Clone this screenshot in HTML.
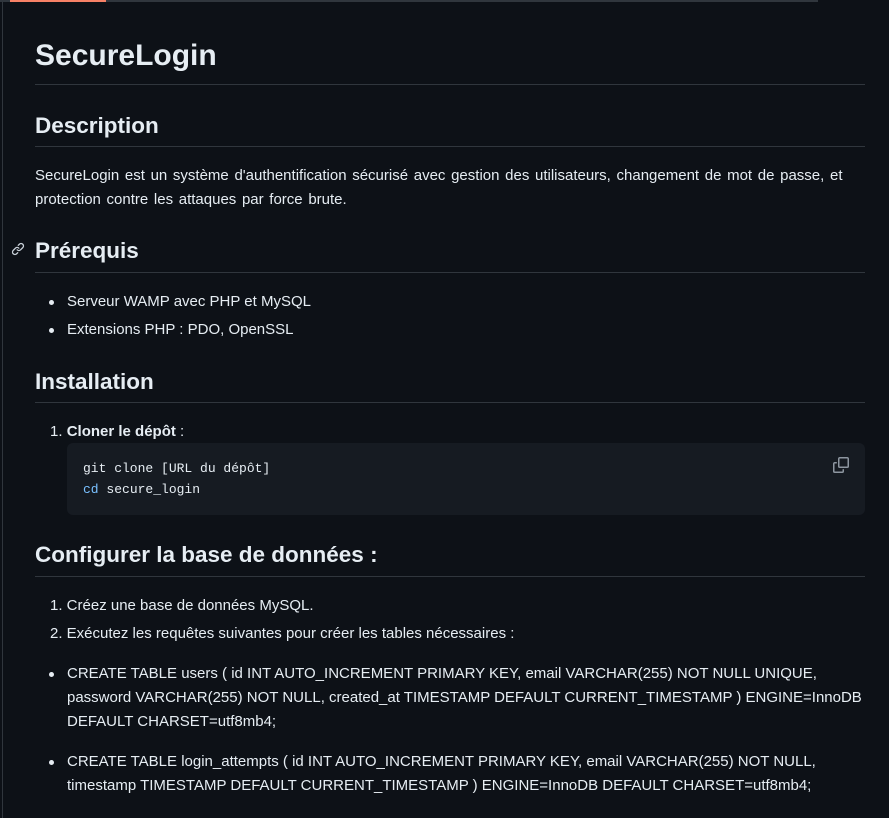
<!DOCTYPE html>
<html><head><meta charset="utf-8"><style>
html,body{margin:0;padding:0;background:#0d1117;width:889px;height:818px;overflow:hidden}
body{position:relative;font-family:"Liberation Sans",sans-serif;color:#e6edf3;font-size:15px}
.a{position:absolute;white-space:nowrap}
.h1{font-size:30px;font-weight:600;left:35px;top:39px}
.h2{font-size:22.5px;font-weight:600;left:35px}
.hr{position:absolute;left:35px;width:830px;height:1px;background:#30363d}
.p{left:35px;font-size:15px}
.li{left:67px;font-size:15px}
.dot{position:absolute;left:49px;width:5px;height:5px;border-radius:50%;background:#e6edf3}
.num{left:50px;font-size:15px}
.code{position:absolute;left:67px;top:443px;width:798px;height:72px;background:#161b22;border-radius:6px}
.mono{font-family:"Liberation Mono",monospace;font-size:13px}
</style></head><body>
<div style="position:absolute;left:0;top:0;width:818px;height:2px;background:#30363d"></div>
<div style="position:absolute;left:10px;top:0;width:96px;height:2px;background:#f78166"></div>
<div style="position:absolute;left:2px;top:2px;width:1px;height:816px;background:#30363d"></div>

<div class="a h1">SecureLogin</div>
<div class="hr" style="top:84px"></div>
<div class="a h2" style="top:113px">Description</div>
<div class="hr" style="top:146px"></div>
<div class="a p" style="top:167px;word-spacing:1.5px">SecureLogin est un système d'authentification sécurisé avec gestion des utilisateurs, changement de mot de passe, et</div>
<div class="a p" style="top:191px;word-spacing:1.5px">protection contre les attaques par force brute.</div>

<svg style="position:absolute;left:11px;top:242px" width="14" height="14" viewBox="0 0 16 16" fill="#c9d1d9"><path d="m7.775 3.275 1.25-1.25a3.5 3.5 0 1 1 4.950 4.95l-2.5 2.5a3.5 3.5 0 0 1-4.95 0 .751.751 0 0 1 .018-1.042.751.751 0 0 1 1.042-.018 1.998 1.998 0 0 0 2.83 0l2.5-2.5a2.002 2.002 0 0 0-2.83-2.83l-1.25 1.250a.751.751 0 0 1-1.042-.018.751.751 0 0 1-.018-1.042Zm-4.69 9.64a1.998 1.998 0 0 0 2.83 0l1.25-1.25a.751.751 0 0 1 1.042.018.751.751 0 0 1 .018 1.042l-1.25 1.25a3.5 3.5 0 1 1-4.95-4.95l2.5-2.5a3.5 3.5 0 0 1 4.95 0 .751.751 0 0 1-.018 1.042.751.751 0 0 1-1.042.018 1.998 1.998 0 0 0-2.83 0l-2.5 2.5a1.998 1.998 0 0 0 0 2.830Z"/></svg>
<div class="a h2" style="top:238px">Prérequis</div>
<div class="hr" style="top:272px"></div>
<div class="dot" style="top:300px"></div><div class="a li" style="top:293px">Serveur WAMP avec PHP et MySQL</div>
<div class="dot" style="top:328px"></div><div class="a li" style="top:321px">Extensions PHP : PDO, OpenSSL</div>

<div class="a h2" style="top:369px">Installation</div>
<div class="hr" style="top:402px"></div>
<div class="a num" style="top:423px">1. <b>Cloner le dépôt</b> :</div>
<div class="code"></div>
<div class="a mono" style="left:83px;top:461px;color:#e6edf3">git clone [URL du dépôt]</div>
<div class="a mono" style="left:83px;top:482px;color:#e6edf3"><span style="color:#79c0ff">cd</span> secure_login</div>
<svg style="position:absolute;left:833px;top:457px" width="16" height="16" viewBox="0 0 16 16" fill="#8d96a0"><path d="M0 6.75C0 5.784.784 5 1.75 5h1.5a.75.75 0 0 1 0 1.5h-1.5a.25.25 0 0 0-.25.25v7.5c0 .138.112.25.25.25h7.5a.25.25 0 0 0 .25-.25v-1.5a.75.75 0 0 1 1.5 0v1.5A1.75 1.75 0 0 1 9.25 16h-7.5A1.75 1.75 0 0 1 0 14.25Z"/><path d="M5 1.75C5 .784 5.784 0 6.75 0h7.5C15.216 0 16 .784 16 1.75v7.5A1.75 1.75 0 0 1 14.25 11h-7.5A1.75 1.75 0 0 1 5 9.25Zm1.75-.25a.25.25 0 0 0-.25.25v7.5c0 .138.112.25.25.25h7.5a.25.25 0 0 0 .25-.25v-7.5a.25.25 0 0 0-.25-.25Z"/></svg>

<div class="a h2" style="top:542px">Configurer la base de données :</div>
<div class="hr" style="top:576px"></div>
<div class="a num" style="top:597px">1. Créez une base de données MySQL.</div>
<div class="a num" style="top:625px">2. Exécutez les requêtes suivantes pour créer les tables nécessaires :</div>
<div class="dot" style="top:672px"></div>
<div class="a li" style="top:665px">CREATE TABLE users ( id INT AUTO_INCREMENT PRIMARY KEY, email VARCHAR(255) NOT NULL UNIQUE,</div>
<div class="a li" style="top:689px">password VARCHAR(255) NOT NULL, created_at TIMESTAMP DEFAULT CURRENT_TIMESTAMP ) ENGINE=InnoDB</div>
<div class="a li" style="top:713px">DEFAULT CHARSET=utf8mb4;</div>
<div class="dot" style="top:760px"></div>
<div class="a li" style="top:753px">CREATE TABLE login_attempts ( id INT AUTO_INCREMENT PRIMARY KEY, email VARCHAR(255) NOT NULL,</div>
<div class="a li" style="top:777px">timestamp TIMESTAMP DEFAULT CURRENT_TIMESTAMP ) ENGINE=InnoDB DEFAULT CHARSET=utf8mb4;</div>
</body></html>
